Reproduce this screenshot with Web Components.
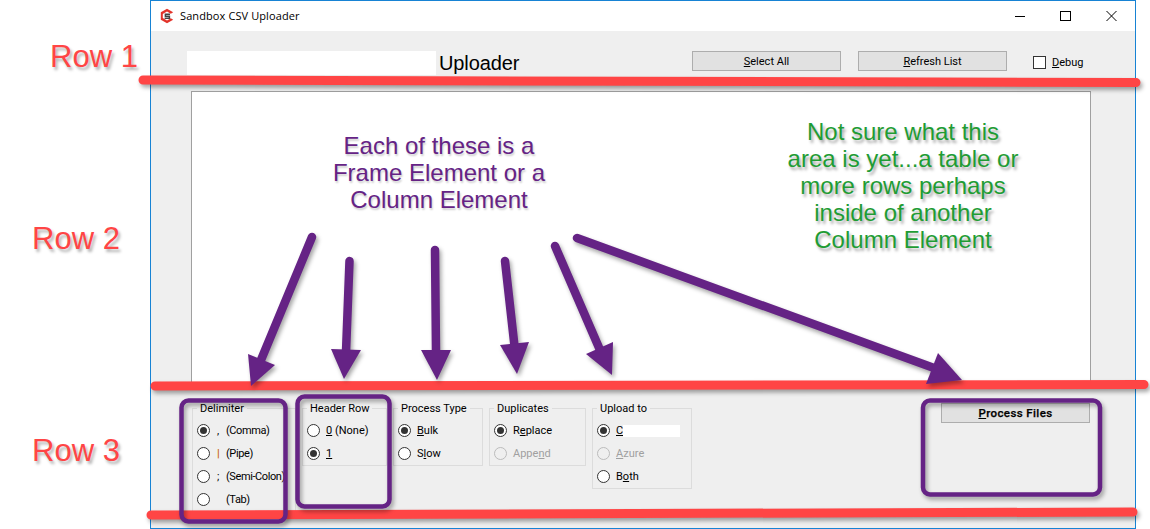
<!DOCTYPE html>
<html><head><meta charset="utf-8">
<style>
html,body{margin:0;padding:0;background:#fff}
body{width:1150px;height:529px;overflow:hidden;position:relative;font-family:Roboto,"Open Sans","Liberation Sans",sans-serif;font-size:11px;color:#000}
</style></head><body>
<template id="t-win"><style>
:host{display:flex;flex-direction:column;box-sizing:border-box;margin-left:150px;width:986px;height:529px;border:1px solid #1783d4;background:#efefef}
</style><slot></slot></template>

<template id="t-title"><style>
:host{display:flex;align-items:center;height:30px;background:#fff;flex:none;font:11px "Open Sans",sans-serif;padding-left:9px}
svg.logo{width:14px;height:16px;margin-right:6px;flex:none}
.t{flex:1;letter-spacing:.1px;padding-bottom:1px}
.c{display:flex;flex:none;margin-right:1px}
.c span{width:46px;height:30px;display:flex;align-items:center;justify-content:center}
.c svg{width:46px;height:30px;display:block}
</style>
<svg class="logo" viewBox="0 0 14 16"><path d="M7 .8 13.200 4.300 10.800 5.800 7 3.600 2.800 6v4L7 12.400l3.800-2.200 2.400 1.500L7 15.200.8 11.700V4.300Z" fill="#e2332a"/><path d="M10 6.200H5.400v2H9.400v2H4.600" fill="none" stroke="#444" stroke-width="1.500"/></svg>
<span class="t"><slot></slot></span>
<div class="c">
<span><svg viewBox="0 0 46 30"><path d="M19 15.500h10" stroke="#000" fill="none"/></svg></span>
<span><svg viewBox="0 0 46 30"><rect x="18.500" y="10.500" width="10" height="9" stroke="#000" fill="none"/></svg></span>
<span><svg viewBox="0 0 46 30"><path d="M18.500 10l10 10M28.500 10l-10 10" stroke="#000" fill="none"/></svg></span>
</div></template>

<template id="t-tool"><style>
:host{display:flex;align-items:flex-start;flex:none;height:60px;box-sizing:border-box;padding:20px 32px 0 36px}
</style><slot></slot></template>

<template id="t-head"><style>
:host{display:flex;align-items:flex-start;flex:1;height:24px}
.b{width:249px;height:24px;background:#fff;flex:none}
.h{font:20px/24px "Liberation Sans",sans-serif;margin-left:3px;letter-spacing:-.1px}
</style><div class="b"></div><div class="h"><slot></slot></div></template>

<template id="t-btn"><style>
:host{display:flex;align-items:center;justify-content:center;box-sizing:border-box;width:149px;height:20px;background:#e1e1e1;border:1px solid #adadad;flex:none;font-size:11px}
:host([strong]){font-weight:500;font-size:11.5px;letter-spacing:.4px;-webkit-text-stroke:.25px #000}
:host([gap]){margin-left:17px}
</style><span><slot></slot></span></template>

<template id="t-chk"><style>
:host{display:flex;align-items:center;width:70px;height:20px;flex:none;margin-left:26px;margin-top:1px;font-size:11px}
i{display:block;width:13px;height:13px;box-sizing:border-box;border:1px solid #333;background:#fff;margin-right:6px}
</style><i></i><span><slot></slot></span></template>

<template id="t-panel"><style>
:host{display:block;flex:none;box-sizing:border-box;height:294px;margin:0 44px 0 40px;background:#fff;border:1px solid #a0a0a0}
</style></template>

<template id="t-row3"><style>
:host{display:flex;align-items:flex-start;flex:1;gap:6px;padding:23px 45px 0 41px}
</style><slot></slot></template>

<template id="t-group"><style>
:host{display:block;box-sizing:border-box;border:1px solid #dcdcdc;padding:0 4px 0;flex:none;height:max-content}
.l{display:block;width:max-content;height:18px;margin:-8px 0 -8px 0;padding:0 3px;background:#efefef;line-height:16px;font-size:11px}
.r{display:block;padding-top:8px}
</style><div class="l"><slot name="legend"></slot></div><div class="r"><slot></slot></div></template>

<template id="t-radio"><style>
:host{display:flex;align-items:center;height:23px;font-size:11px;white-space:nowrap}
:host([disabled]){color:#a0a0a0}
i{display:flex;align-items:center;justify-content:center;width:13px;height:13px;box-sizing:border-box;border:1px solid #333;border-radius:50%;background:#fff;margin-right:6px;flex:none}
:host([disabled]) i{border-color:#bcbcbc;background:#efefef}
:host([checked]) i::after{content:"";width:7px;height:7px;border-radius:50%;background:#333}
.k{display:none;width:9px;flex:none;padding-bottom:1px}
.s{padding-bottom:1px}
:host([keyed]) .k{display:block}
:host([keyed]) .s{letter-spacing:-.4px}
:host([keyed]) i{margin-right:7px}
.k.o{color:#c8640a;font-weight:700}
.w{display:none;width:57px;height:12px;background:#fff}
:host([masked]) .w{display:block}
</style><i></i><span class="k"></span><span class="s"><slot></slot></span><span class="w"></span></template>

<template id="t-note"><style>
:host{position:absolute;left:0;top:0;width:1150px;height:529px;display:block;pointer-events:none;font-family:"Liberation Sans",sans-serif}
svg{position:absolute;left:0;top:0;width:1150px;height:529px}
.lab{position:absolute;font-size:31px;line-height:34px;color:#ff4545;text-shadow:2px 3px 3px rgba(0,0,0,.3)}
.txt{position:absolute;text-align:center;font-size:24px;line-height:27px;transform:translateX(-50%);white-space:nowrap}
.p{color:#652385;text-shadow:1px 2px 2px rgba(0,0,0,.2)}
.g{color:#1f9c34;text-shadow:2px 3px 3px rgba(0,0,0,.35)}
.sh{filter:drop-shadow(2px 3px 2px rgba(0,0,0,.35))}
</style>
<div class="lab" style="left:50px;top:40px">Row 1</div>
<div class="lab" style="left:32px;top:222px">Row 2</div>
<div class="lab" style="left:32px;top:434px">Row 3</div>
<div class="txt p" style="left:439px;top:132px">Each of these is a<br>Frame Element or a<br>Column Element</div>
<div class="txt g" style="left:903px;top:118px">Not sure what this<br>area is yet...a table or<br>more rows perhaps<br>inside of another<br>Column Element</div>
<svg viewBox="0 0 1150 529">
<g class="sh" fill="none" stroke="#ff4545" stroke-width="9" stroke-linecap="round">
<path d="M143 80 1136 82.500"/>
<path d="M155 386 1144 384.500"/>
<path d="M151 515 1133 512"/>
</g>
<g class="sh" fill="none" stroke="#652385" stroke-width="4.500">
<rect x="181.500" y="400.500" width="104" height="121" rx="7"/>
<rect x="297.500" y="396.500" width="92" height="110" rx="7"/>
<rect x="923" y="400.500" width="177" height="94" rx="7"/>
</g>
<g class="sh" stroke="#652385" stroke-width="8.500" stroke-linecap="round" fill="#652385">
<path d="M312 237 261 360" />
<path d="M349.500 261 346 352"/>
<path d="M435 250 436 352"/>
<path d="M505 261 514.500 346"/>
<path d="M555 246 600 350"/>
<path d="M577 238 934 368"/>
<g stroke="none">
<path d="M248 354 275 365 251 386Z"/>
<path d="M331 349 361 350 344 379Z"/>
<path d="M421 350 451 350 437 380Z"/>
<path d="M500 345 529 342 517 374Z"/>
<path d="M586 354 613 342 612 375Z"/>
<path d="M938 353 962 380 926 384Z"/>
</g>
</g>
</svg></template>

<win-frame>
<title-bar>Sandbox CSV Uploader</title-bar>
<tool-row>
<head-title>Uploader</head-title>
<win-btn><u>S</u>elect All</win-btn>
<win-btn gap><u>R</u>efresh List</win-btn>
<win-check><u>D</u>ebug</win-check>
</tool-row>
<file-panel></file-panel>
<opts-row>
<group-box style="width:104px"><span slot="legend">Delimiter</span>
<radio-opt checked key=",">(Comma)</radio-opt>
<radio-opt key="|" orange>(Pipe)</radio-opt>
<radio-opt key=";">(Semi-Colon)</radio-opt>
<radio-opt key=" ">(Tab)</radio-opt>
</group-box>
<group-box style="width:85px"><span slot="legend">Header Row</span>
<radio-opt><u>0</u> (None)</radio-opt>
<radio-opt checked><u>1</u></radio-opt>
</group-box>
<group-box style="width:90px"><span slot="legend">Process Type</span>
<radio-opt checked><u>B</u>ulk</radio-opt>
<radio-opt>S<u>l</u>ow</radio-opt>
</group-box>
<group-box style="width:97px"><span slot="legend">Duplicates</span>
<radio-opt checked>R<u>e</u>place</radio-opt>
<radio-opt disabled>Appe<u>n</u>d</radio-opt>
</group-box>
<group-box style="width:100px"><span slot="legend">Upload to</span>
<radio-opt checked masked><u>C</u></radio-opt>
<radio-opt disabled><u>A</u>zure</radio-opt>
<radio-opt>B<u>o</u>th</radio-opt>
</group-box>
<win-btn strong style="margin-left:auto;margin-top:-5px"><u>P</u>rocess Files</win-btn>
</opts-row>
</win-frame>
<note-layer></note-layer>

<script>
function reg(tag,tpl,init){
  customElements.define(tag,class extends HTMLElement{
    constructor(){super();this.attachShadow({mode:"open"}).appendChild(document.getElementById(tpl).content.cloneNode(true));}
    connectedCallback(){if(init)init(this);}
  });
}
reg("win-frame","t-win");
reg("title-bar","t-title");
reg("tool-row","t-tool");
reg("head-title","t-head");
reg("win-btn","t-btn");
reg("win-check","t-chk");
reg("file-panel","t-panel");
reg("opts-row","t-row3");
reg("group-box","t-group");
reg("radio-opt","t-radio",function(el){
  if(el.hasAttribute("key")){
    el.setAttribute("keyed","");
    var k=el.shadowRoot.querySelector(".k");
    k.textContent=el.getAttribute("key");
    if(el.hasAttribute("orange"))k.classList.add("o");
  }
});
reg("note-layer","t-note");
</script>
</body></html>
